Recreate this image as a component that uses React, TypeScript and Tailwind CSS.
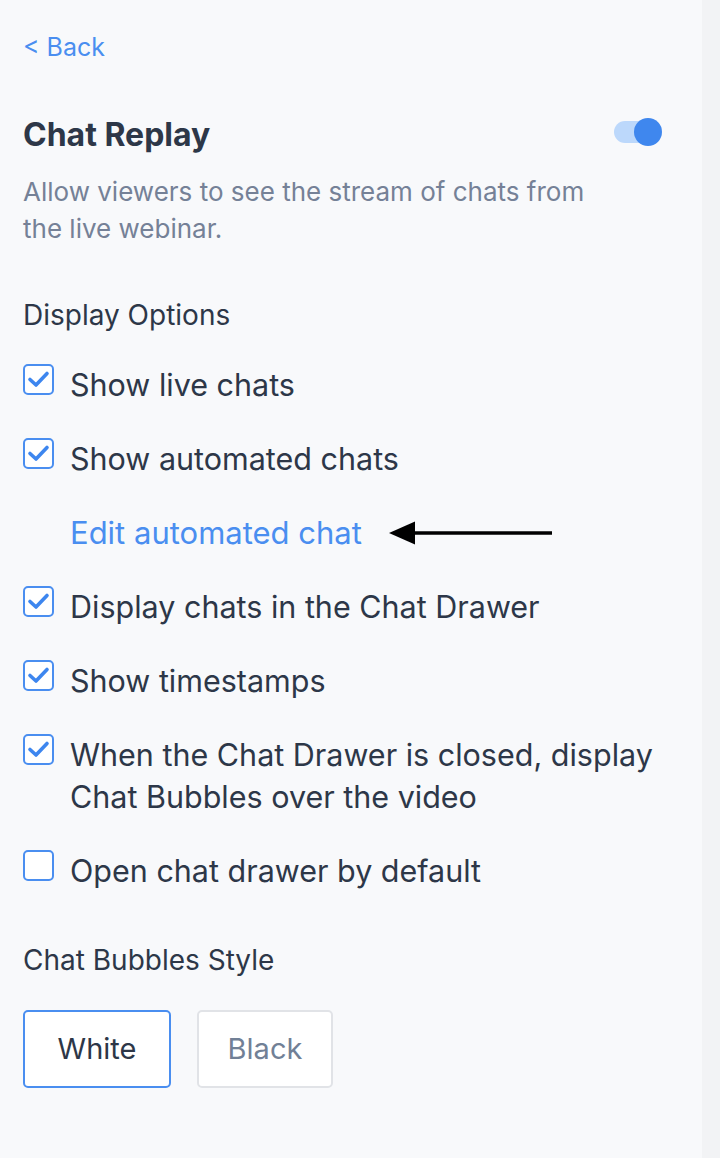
import { useState } from 'react';

const font = { fontFamily: 'Inter, "Noto Sans", sans-serif' };

type Option = { id: string; label: string; checked: boolean };

const initialOptions: Option[] = [
    { id: 'live', label: 'Show live chats', checked: true },
    { id: 'automated', label: 'Show automated chats', checked: true },
    { id: 'drawer', label: 'Display chats in the Chat Drawer', checked: true },
    { id: 'timestamps', label: 'Show timestamps', checked: true },
    { id: 'bubbles', label: 'When the Chat Drawer is closed, display Chat Bubbles over the video', checked: true },
    { id: 'open', label: 'Open chat drawer by default', checked: false },
];

function Checkbox({ checked }: { checked: boolean }) {
    return (
        <span className="flex h-[31px] w-[31px] shrink-0 items-center justify-center rounded-[5px] border-2 border-[#4a8ef0] bg-white">
            {checked && (
                <svg width="27" height="27" viewBox="0 0 27 27" fill="none">
                    <path d="M5 13.5 L11 19 L22 7.5" stroke="#3d86ef" strokeWidth="3.6" strokeLinecap="round" strokeLinejoin="round" />
                </svg>
            )}
        </span>
    );
}

function OptionRow({ option, onToggle }: { option: Option; onToggle: () => void }) {
    return (
        <div className="flex cursor-pointer gap-[16px]" onClick={onToggle}>
            <Checkbox checked={option.checked} />
            <span className="text-[30.5px] leading-[42px] text-[#2d3748]">{option.label}</span>
        </div>
    );
}

export default function App() {
    const [options, setOptions] = useState(initialOptions);
    const [style, setStyle] = useState<'white' | 'black'>('white');

    const toggle = (id: string) => setOptions(opts => opts.map(o => (o.id === id ? { ...o, checked: !o.checked } : o)));

    const before = options.slice(0, 2);
    const after = options.slice(2);

    return (
        <div className="flex min-h-[1158px] w-[720px]" style={font}>
            <div className="w-[702px] bg-[#f8f9fb] pl-[23px] pr-[40px]">
                <div className="pt-[31px] text-[25px] leading-[32px] text-[#4a8ef0]">&lt; Back</div>

                <div className="mt-[52px] flex items-center justify-between">
                    <h1 className="text-[32px] font-bold leading-[40px] text-[#2d3748]">Chat Replay</h1>
                    <div className="relative -mt-[6px] h-[28px] w-[48px]">
                        <div className="absolute left-0 top-[3px] h-[22px] w-[41px] rounded-full bg-[#bcd8fb]" />
                        <div className="absolute right-0 top-0 h-[28px] w-[28px] rounded-full bg-[#3f87ee]" />
                    </div>
                </div>

                <p className="mt-[18px] w-[590px] text-[26px] leading-[37px] text-[#758197]">
                    Allow viewers to see the stream of chats from the live webinar.
                </p>

                <div className="mt-[52px] text-[28px] leading-[32px] text-[#2d3748]">Display Options</div>

                <div className="-mr-[30px] mt-[33px] flex flex-col gap-[32px]">
                    {before.map(o => (
                        <OptionRow key={o.id} option={o} onToggle={() => toggle(o.id)} />
                    ))}
                    <div className="flex items-center pl-[47px]">
                        <span className="text-[31px] leading-[42px] text-[#4a8ef0]">Edit automated chat</span>
                        <svg className="ml-[27px]" width="164" height="26" viewBox="0 0 164 26">
                            <path d="M0 13 L26 1.5 L26 24.5 Z" fill="#000" />
                            <line x1="24" y1="13" x2="163" y2="13" stroke="#000" strokeWidth="3.5" />
                        </svg>
                    </div>
                    {after.map(o => (
                        <OptionRow key={o.id} option={o} onToggle={() => toggle(o.id)} />
                    ))}
                </div>

                <div className="mt-[52px] text-[28px] leading-[32px] text-[#2d3748]">Chat Bubbles Style</div>

                <div className="mt-[34px] flex gap-[26px]">
                    <button
                        onClick={() => setStyle('white')}
                        className={`h-[78px] w-[148px] rounded-[5px] border-2 bg-white text-[29px] ${
                            style === 'white' ? 'border-[#4a8ef0] text-[#2d3748]' : 'border-[#e1e3e7] text-[#718096]'
                        }`}
                    >
                        White
                    </button>
                    <button
                        onClick={() => setStyle('black')}
                        className={`h-[78px] w-[136px] rounded-[5px] border-2 bg-white text-[29px] ${
                            style === 'black' ? 'border-[#4a8ef0] text-[#2d3748]' : 'border-[#e1e3e7] text-[#718096]'
                        }`}
                    >
                        Black
                    </button>
                </div>
            </div>
            <div className="w-[18px] bg-[#f2f3f5]" />
        </div>
    );
}
